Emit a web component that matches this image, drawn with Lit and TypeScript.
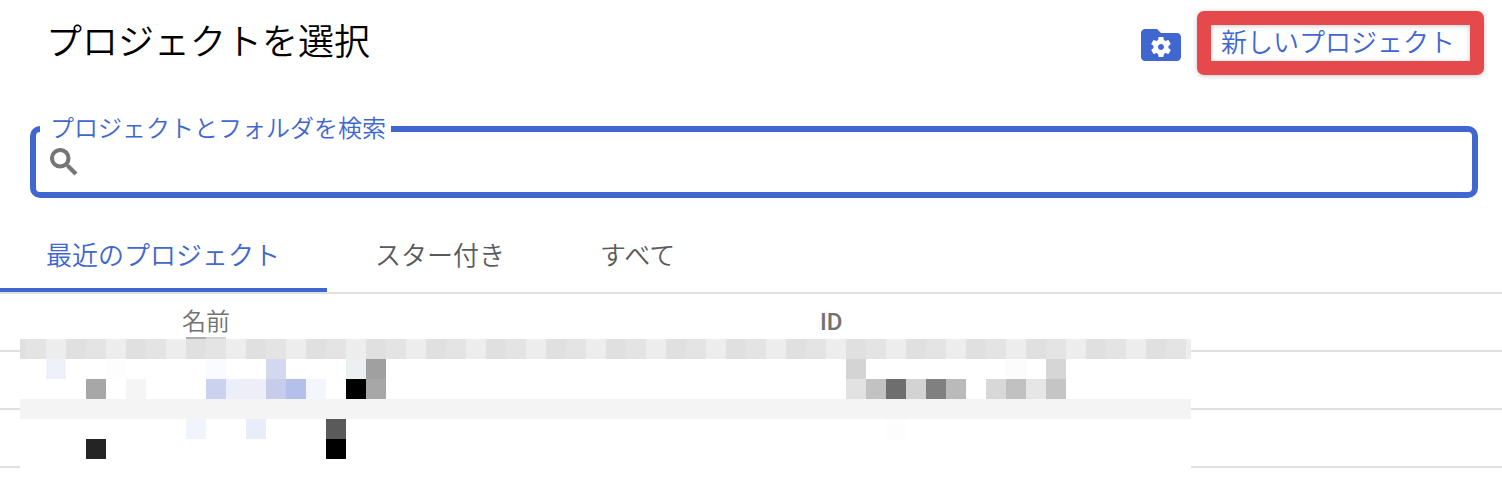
import { LitElement, html, svg, css } from "lit";
import { customElement, state } from "lit/decorators.js";
import { classMap } from "lit/directives/class-map.js";

/* Censored area: 20px tiles as [column, row, colour]; row 0 is the first tile row. */
const BAND = ["#e4e4e4", "#ededed", "#e0e0e0"];
const TILES: [number, number, string][] = [
  [2, 1, "#edf1fa"], [5, 1, "#fdfdfd"], [10, 1, "#fafbfe"], [13, 1, "#d3d8ee"],
  [17, 1, "#edf0f0"], [18, 1, "#a0a0a0"], [42, 1, "#d4d4d4"], [50, 1, "#fcfcfc"], [52, 1, "#d6d6d6"],
  [4, 2, "#a7a7a7"], [6, 2, "#f5f5f5"], [10, 2, "#cbd2ef"], [11, 2, "#eceff9"], [12, 2, "#eeeef9"],
  [13, 2, "#c6cce9"], [14, 2, "#b4bfea"], [15, 2, "#f4f6fd"], [17, 2, "#000000"], [18, 2, "#a7a7a7"],
  [42, 2, "#e2e2e2"], [43, 2, "#c2c2c2"], [44, 2, "#6e6e6e"], [45, 2, "#d3d3d3"], [46, 2, "#808080"],
  [47, 2, "#bababa"], [49, 2, "#d8d8d8"], [50, 2, "#c1c1c1"], [51, 2, "#e6e6e6"], [52, 2, "#c5c5c5"],
  [9, 4, "#f0f4fd"], [12, 4, "#e9edf9"], [16, 4, "#5a5a5a"], [44, 4, "#fdfdfd"],
  [4, 5, "#242424"], [16, 5, "#000000"],
];

@customElement("app-root")
export class AppRoot extends LitElement {
  static styles = css`
    :host {
      display: block;
      background: #fff;
      color: #000;
      font-family: Roboto, "Noto Sans CJK JP", sans-serif;
      font-weight: 350;
      overflow: hidden;
    }
    * { box-sizing: border-box; }
    button { font: inherit; background: none; border: 0; padding: 0; cursor: pointer; }
    header {
      display: flex;
      justify-content: space-between;
      align-items: flex-start;
      padding: 11px 18px 0 46px;
    }
    h1 { margin: 0; font-size: 36px; line-height: 64px; font-weight: 350; }
    .actions { display: flex; align-items: flex-start; gap: 12px; }
    .manage { display: block; height: 48px; margin-top: 10px; }
    .manage svg { display: block; width: 48px; height: 48px; }
    .create {
      height: 64px;
      padding: 0 15px 0 10px;
      border: 14px solid #e5494c;
      border-radius: 7px;
      font-size: 26px;
      line-height: 36px;
      color: #4067d0;
      white-space: nowrap;
      box-shadow: 0 1px 5px rgba(0, 0, 0, 0.22), inset 0 1px 5px rgba(0, 0, 0, 0.2);
    }
    fieldset {
      min-width: 0;
      margin: 42px 24px 0 30px;
      padding: 0 4px;
      border: 6px solid #4067d0;
      border-radius: 10px;
    }
    legend {
      padding: 0 5px 0 10px;
      font-size: 24px;
      line-height: 24px;
      color: #4067d0;
    }
    .field { display: flex; align-items: flex-start; gap: 8px; height: 51px; padding: 3px 6px 0 6px; }
    .field svg { flex: none; width: 36px; height: 36px; }
    .field input {
      flex: 1;
      min-width: 0;
      height: 36px;
      padding: 0;
      border: 0;
      outline: 0;
      background: none;
      font: inherit;
      font-size: 24px;
    }
    .tabs { display: flex; gap: 2px; margin-top: 26px; border-bottom: 2px solid #e0e0e0; }
    .tab {
      height: 68px;
      padding: 0 47px 0 46px;
      border-bottom: 4px solid transparent;
      font-size: 26px;
      line-height: 64px;
      color: #5a5a5a;
      white-space: nowrap;
    }
    .tab.active { color: #4067d0; border-bottom-color: #4067d0; }
    .list { position: relative; }
    table { width: 100%; border-collapse: separate; border-spacing: 0; table-layout: fixed; }
    th, td { height: 58px; padding: 0; border-bottom: 2px solid #e0e0e0; }
    th { font-size: 24px; line-height: 54px; color: #727272; text-align: left; font-weight: 350; }
    th.id { font-weight: 500; }
    .pick { width: 182px; }
    .name { width: 638px; }
    .mosaic { position: absolute; left: 20px; top: 43px; width: 1171px; height: 163px; }
  `;

  @state() private selected = 0;
  private tabs = ["最近のプロジェクト", "スター付き", "すべて"];

  private renderMosaic() {
    const band = Array.from({ length: 60 }, (_, i) => i - 1);
    return html`<svg class="mosaic" viewBox="20 -2 1171 163" shape-rendering="crispEdges" aria-hidden="true">
      <rect x="20" y="0" width="1171" height="161" fill="#fff"></rect>
      <rect x="186" y="-2" width="20" height="2" fill="#adadad"></rect>
      <rect x="206" y="-2" width="20" height="2" fill="#d4d4d4"></rect>
      ${band.map((c) => svg`<rect x=${6 + c * 20 + 20} y="0" width="20" height="20" fill=${BAND[(c + 3) % 3]}></rect>`)}
      <rect x="20" y="60" width="1171" height="20" fill="#f4f4f4"></rect>
      ${TILES.map(([c, r, fill]) => svg`<rect x=${6 + c * 20} y=${r * 20} width="20" height="20" fill=${fill}></rect>`)}
    </svg>`;
  }

  render() {
    return html`
      <header>
        <h1>プロジェクトを選択</h1>
        <div class="actions">
          <button class="manage" aria-label="フォルダの管理">
            <svg viewBox="0 0 24 24" aria-hidden="true">
              <path fill="#4067d0" d="M10 4H4c-1.1 0-2 .9-2 2v12c0 1.1.9 2 2 2h16c1.1 0 2-.9 2-2V8c0-1.1-.9-2-2-2h-8l-2-2z"/>
              <path fill="#fff" transform="translate(6 7) scale(.5)" d="M19.43 12.98c.04-.32.07-.64.07-.98s-.03-.66-.07-.98l2.11-1.65c.19-.15.24-.42.12-.64l-2-3.46c-.12-.22-.39-.3-.61-.22l-2.49 1c-.52-.4-1.08-.73-1.69-.98l-.38-2.65C14.46 2.18 14.25 2 14 2h-4c-.25 0-.46.18-.49.42l-.38 2.65c-.61.25-1.17.59-1.69.98l-2.49-1c-.23-.09-.49 0-.61.22l-2 3.46c-.13.22-.07.49.12.64l2.11 1.65c-.04.32-.07.65-.07.98s.03.66.07.98l-2.11 1.65c-.19.15-.24.42-.12.64l2 3.46c.12.22.39.3.61.22l2.49-1c.52.4 1.08.73 1.69.98l.38 2.65c.03.24.24.42.49.42h4c.25 0 .46-.18.49-.42l.38-2.65c.61-.25 1.17-.59 1.69-.98l2.49 1c.23.09.49 0 .61-.22l2-3.46c.12-.22.07-.49-.12-.64l-2.11-1.65zM12 15c-1.65 0-3-1.35-3-3s1.35-3 3-3 3 1.35 3 3-1.35 3-3 3z"/>
            </svg>
          </button>
          <button class="create">新しいプロジェクト</button>
        </div>
      </header>

      <fieldset>
        <legend><label for="search">プロジェクトとフォルダを検索</label></legend>
        <div class="field">
          <svg viewBox="0 0 24 24" aria-hidden="true">
            <path fill="#757575" stroke="#757575" stroke-width=".7" d="M15.5 14h-.79l-.28-.27C15.41 12.59 16 11.11 16 9.5 16 5.91 13.09 3 9.5 3S3 5.91 3 9.5 5.91 16 9.5 16c1.61 0 3.09-.59 4.23-1.57l.27.28v.79l5 4.99L20.49 19l-4.99-5zm-6 0C7.01 14 5 11.99 5 9.5S7.01 5 9.5 5 14 7.01 14 9.5 11.99 14 9.5 14z"/>
          </svg>
          <input id="search" type="text" autocomplete="off" />
        </div>
      </fieldset>

      <nav class="tabs" role="tablist">
        ${this.tabs.map(
          (label, i) => html`<button
            role="tab"
            class=${classMap({ tab: true, active: i === this.selected })}
            aria-selected=${i === this.selected}
            @click=${() => (this.selected = i)}
          >${label}</button>`
        )}
      </nav>

      <div class="list">
        <table>
          <thead>
            <tr><th class="pick"></th><th class="name" scope="col">名前</th><th class="id" scope="col">ID</th></tr>
          </thead>
          <tbody>
            ${[0, 1].map(() => html`<tr><td></td><td></td><td></td></tr>`)}
          </tbody>
        </table>
        ${this.renderMosaic()}
      </div>
    `;
  }
}
